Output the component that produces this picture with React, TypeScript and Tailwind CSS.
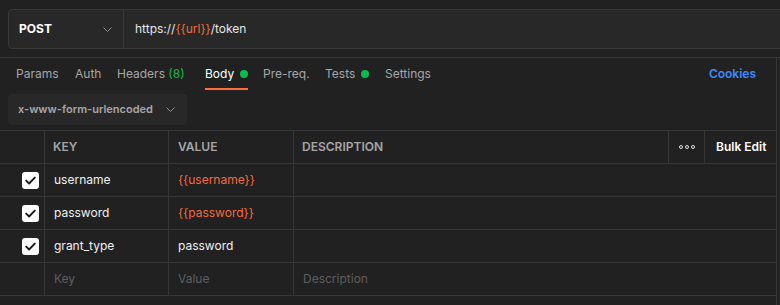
import React from 'react';

const font = { fontFamily: 'Inter, "Noto Sans", sans-serif' };

const Chevron = ({ className = '' }: { className?: string }) => (
    <svg className={className} width="9" height="5" viewBox="0 0 9 5" fill="none">
        <path d="M0.5 0.5l4 4 4-4" stroke="#8f8f8f" strokeWidth="1" />
    </svg>
);

const Check = () => (
    <div className="w-[17px] h-[17px] rounded-[3px] bg-white flex items-center justify-center">
        <svg width="11" height="9" viewBox="0 0 11 9" fill="none">
            <path d="M1.2 4.6l2.9 2.9L9.8 1.6" stroke="#1a1a1a" strokeWidth="1.9" strokeLinecap="round" strokeLinejoin="round" />
        </svg>
    </div>
);

const Dot = () => <span className="inline-block w-2 h-2 rounded-full bg-[#0cbb52] ml-[6px]" />;

interface Row {
    key: string;
    value: string;
    variable?: boolean;
}

const rows: Row[] = [
    { key: 'username', value: '{{username}}', variable: true },
    { key: 'password', value: '{{password}}', variable: true },
    { key: 'grant_type', value: 'password' },
];

export default function App() {
    return (
        <div className="w-[780px] h-[305px] bg-[#212121] overflow-hidden text-[12px]" style={font}>
            <div className="h-[58px] pt-[9px] pl-2 border-b border-[#363636]">
                <div className="flex h-10 mr-[-10px] bg-[#282828] border border-[#383838] rounded-[4px]">
                    <div className="w-[115px] flex items-center justify-between pl-[10px] pr-[11px] border-r border-[#383838]">
                        <span className="font-bold text-white">POST</span>
                        <Chevron />
                    </div>
                    <div className="flex items-center pl-[11px] text-[#e6e6e6]">
                        https://<span className="text-[#f26b3a]">{'{{url}}'}</span>/token
                    </div>
                </div>
            </div>

            <div className="w-[777px] border-r border-[#363636] h-[247px]">
                <div className="flex items-center h-[32px] pl-4 pr-5 text-[#a6a6a6]">
                    <span className="w-[59px]">Params</span>
                    <span className="w-[42px]">Auth</span>
                    <span className="w-[88px]">Headers <span className="text-[#0cbb52]">(8)</span></span>
                    <span className="w-[58px] flex">
                        <span className="relative flex items-center text-white">
                            Body<Dot />
                            <span className="absolute left-0 right-0 top-[23px] h-[2px] bg-[#ff6c37]" />
                        </span>
                    </span>
                    <span className="w-[62px]">Pre-req.</span>
                    <span className="w-[60px] flex items-center">Tests<Dot /></span>
                    <span>Settings</span>
                    <span className="ml-auto text-[#3d8bff] font-semibold">Cookies</span>
                </div>

                <div className="pl-2 pt-[4px]">
                    <div className="w-[179px] h-[31px] rounded-[4px] bg-[#282828] flex items-center justify-between pl-[10px] pr-[12px]">
                        <span className="text-[#a6a6a6] font-semibold text-[11px]">x-www-form-urlencoded</span>
                        <Chevron />
                    </div>
                </div>

                <div className="mt-[5px] border-t border-[#363636]">
                    <div className="flex h-[33px] border-b border-[#363636] text-[#a6a6a6] font-semibold text-[12px]">
                        <div className="w-[45px] border-r border-[#363636]" />
                        <div className="w-[124px] border-r border-[#363636] flex items-center pl-2">KEY</div>
                        <div className="w-[125px] border-r border-[#363636] flex items-center pl-[9px]">VALUE</div>
                        <div className="w-[375px] border-r border-[#363636] flex items-center pl-2">DESCRIPTION</div>
                        <div className="w-[36px] border-r border-[#363636] flex items-center justify-center gap-[2px]">
                            <span className="w-[4px] h-[4px] rounded-full border border-[#e0e0e0]" />
                            <span className="w-[4px] h-[4px] rounded-full border border-[#e0e0e0]" />
                            <span className="w-[4px] h-[4px] rounded-full border border-[#e0e0e0]" />
                        </div>
                        <div className="flex-1 flex items-center pl-[11px] text-white">Bulk Edit</div>
                    </div>
                    {rows.map((r) => (
                        <div key={r.key} className="flex h-[33px] border-b border-[#363636]">
                            <div className="w-[45px] border-r border-[#363636] flex items-center pl-[22px]">
                                <Check />
                            </div>
                            <div className="w-[124px] border-r border-[#363636] flex items-center pl-[9px] text-[#f0f0f0]">{r.key}</div>
                            <div className={`w-[125px] border-r border-[#363636] flex items-center pl-[9px] ${r.variable ? 'text-[#f26b3a]' : 'text-[#f0f0f0]'}`}>{r.value}</div>
                            <div className="w-[375px]" />
                        </div>
                    ))}
                    <div className="flex h-[33px] border-b border-[#363636] text-[#5e5e5e]">
                        <div className="w-[45px] border-r border-[#363636]" />
                        <div className="w-[124px] border-r border-[#363636] flex items-center pl-[9px]">Key</div>
                        <div className="w-[125px] border-r border-[#363636] flex items-center pl-[9px]">Value</div>
                        <div className="flex-1 flex items-center pl-[9px]">Description</div>
                    </div>
                </div>
            </div>
        </div>
    );
}
